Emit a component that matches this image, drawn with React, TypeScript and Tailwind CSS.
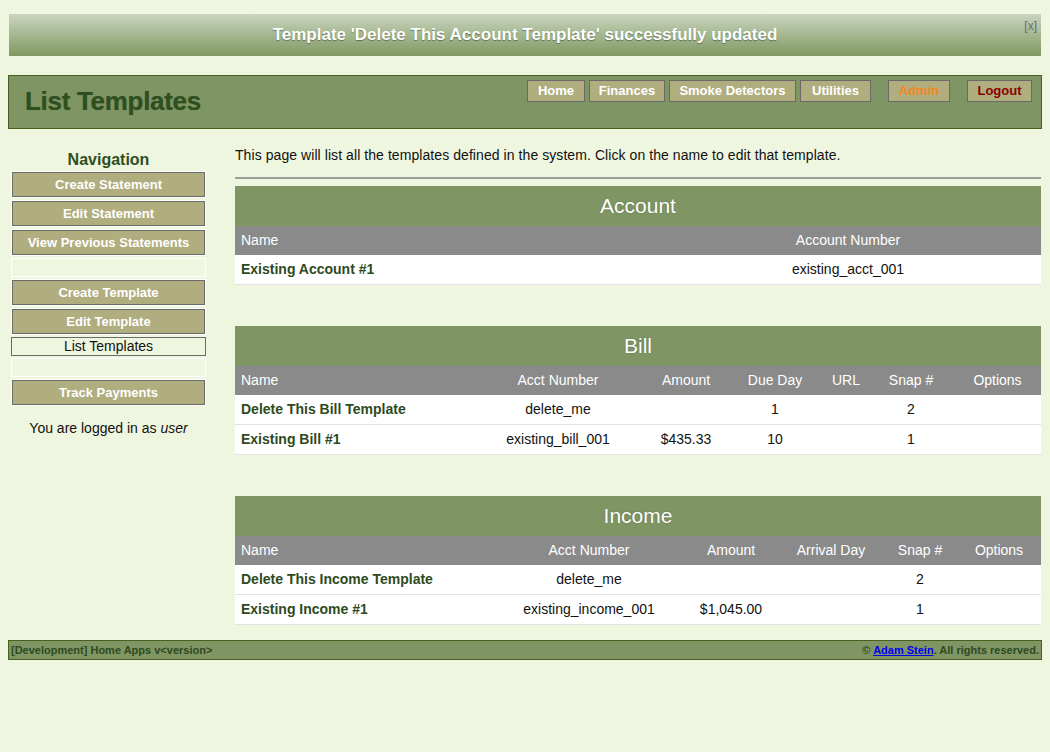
import React from 'react';

const font = "font-['Liberation_Sans',Arial,sans-serif]";

const topNav = [
  { label: 'Home', w: 'w-[58px]', color: 'text-white', ml: '' },
  { label: 'Finances', w: 'w-[76px]', color: 'text-white', ml: 'ml-[4px]' },
  { label: 'Smoke Detectors', w: 'w-[127px]', color: 'text-white', ml: 'ml-[4px]' },
  { label: 'Utilities', w: 'w-[71px]', color: 'text-white', ml: 'ml-[4px]' },
  { label: 'Admin', w: 'w-[62px]', color: 'text-[#f28a1e]', ml: 'ml-[17px]' },
  { label: 'Logout', w: 'w-[65px]', color: 'text-[#8b0000]', ml: 'ml-[17px]' },
];

type NavItem = { label?: string; kind: 'button' | 'spacer' | 'active' };

const sideNav: NavItem[] = [
  { label: 'Create Statement', kind: 'button' },
  { label: 'Edit Statement', kind: 'button' },
  { label: 'View Previous Statements', kind: 'button' },
  { kind: 'spacer' },
  { label: 'Create Template', kind: 'button' },
  { label: 'Edit Template', kind: 'button' },
  { label: 'List Templates', kind: 'active' },
  { kind: 'spacer' },
  { label: 'Track Payments', kind: 'button' },
];

type Col = { title: string; w: string; left?: boolean };

const Section = ({ title, cols, rows }: { title: string; cols: Col[]; rows: string[][] }) => (
  <div className="mb-[41px]">
    <div className="h-[40px] bg-[#7f9664] flex items-center justify-center text-[21px] text-white [text-shadow:0_0_2px_rgba(0,0,0,0.25)]">
      {title}
    </div>
    <div className="h-[29px] bg-[#8a8a8a] flex items-center text-white text-[14px]">
      {cols.map((c) => (
        <div key={c.title} className={`${c.w} ${c.left ? 'text-left pl-[6px]' : 'text-center'} shrink-0`}>
          {c.title}
        </div>
      ))}
    </div>
    {rows.map((r, i) => (
      <div key={i} className="h-[30px] bg-white border-b border-[#e2e2e2] flex items-center text-[14px] text-[#111]">
        {r.map((cell, j) => (
          <div
            key={j}
            className={`${cols[j].w} shrink-0 ${j === 0 ? 'text-left pl-[6px] font-bold text-[#2e4a1e]' : 'text-center'}`}
          >
            {cell}
          </div>
        ))}
      </div>
    ))}
  </div>
);

export default function App() {
  return (
    <div className={`min-h-[752px] bg-[#eff6df] ${font} px-[8px] pt-[14px] pb-[20px]`}>
      {/* flash message */}
      <div className="relative mx-[1px] h-[42px] bg-gradient-to-b from-[#cbd4bf] to-[#7f9a62] flex items-center justify-center">
        <span className="text-white font-bold text-[17px] [text-shadow:0_1px_1px_rgba(60,70,50,0.6)]">
          Template 'Delete This Account Template' successfully updated
        </span>
        <span className="absolute right-[4px] top-[3px] text-[12px] text-[#6b6b6b]">[x]</span>
      </div>

      {/* header */}
      <div className="mt-[19px] h-[54px] bg-[#7f9664] border border-[#46601f] flex justify-between pl-[16px] pr-[9px]">
        <h1 className="mt-[6px] text-[26px] font-bold text-[#2e4f1e] tracking-[-0.3px] [text-shadow:0_0_1px_rgba(0,0,0,0.3)]">
          List Templates
        </h1>
        <div className="flex items-start pt-[4px]">
          {topNav.map((b) => (
            <div
              key={b.label}
              className={`${b.w} ${b.ml} h-[22px] bg-[#b0ad7f] border border-[#6a6a6a] flex items-center justify-center text-[13px] font-bold ${b.color}`}
            >
              {b.label}
            </div>
          ))}
        </div>
      </div>

      {/* body */}
      <div className="flex mt-[18px]">
        <div className="ml-[3px] w-[195px] shrink-0">
          <div className="text-center text-[16px] font-bold text-[#2e4f1e] h-[24px] leading-[26px]">Navigation</div>
          <div className="flex flex-col gap-[2px]">
            {sideNav.map((n, i) =>
              n.kind === 'button' ? (
                <div key={i} className="border border-white">
                  <div className="h-[25px] bg-[#b0ad7f] border border-[#6a6a6a] flex items-center justify-center text-white font-bold text-[13px]">
                    {n.label}
                  </div>
                </div>
              ) : n.kind === 'spacer' ? (
                <div key={i} className="h-[19px] border border-white" />
              ) : (
                <div key={i} className="h-[19px] border border-[#6a6a6a] flex items-center justify-center text-[14px] text-[#111]">
                  {n.label}
                </div>
              )
            )}
          </div>
          <div className="mt-[12px] text-center text-[14px] text-[#111]">
            You are logged in as <i>user</i>
          </div>
        </div>

        <div className="ml-[29px] w-[806px] shrink-0">
          <p className="text-[14px] text-[#111] leading-[18px] -mt-[1px] tracking-[0.07px]">
            This page will list all the templates defined in the system. Click on the name to edit that template.
          </p>
          <div className="mt-[13px] border-t-2 border-[#9c9c9c] mb-[7px]" />

          <Section
            title="Account"
            cols={[
              { title: 'Name', w: 'w-[420px]', left: true },
              { title: 'Account Number', w: 'w-[386px]' },
            ]}
            rows={[['Existing Account #1', 'existing_acct_001']]}
          />
          <Section
            title="Bill"
            cols={[
              { title: 'Name', w: 'w-[235px]', left: true },
              { title: 'Acct Number', w: 'w-[176px]' },
              { title: 'Amount', w: 'w-[80px]' },
              { title: 'Due Day', w: 'w-[98px]' },
              { title: 'URL', w: 'w-[44px]' },
              { title: 'Snap #', w: 'w-[86px]' },
              { title: 'Options', w: 'w-[87px]' },
            ]}
            rows={[
              ['Delete This Bill Template', 'delete_me', '', '1', '', '2', ''],
              ['Existing Bill #1', 'existing_bill_001', '$435.33', '10', '', '1', ''],
            ]}
          />
          <Section
            title="Income"
            cols={[
              { title: 'Name', w: 'w-[260px]', left: true },
              { title: 'Acct Number', w: 'w-[188px]' },
              { title: 'Amount', w: 'w-[96px]' },
              { title: 'Arrival Day', w: 'w-[104px]' },
              { title: 'Snap #', w: 'w-[74px]' },
              { title: 'Options', w: 'w-[84px]' },
            ]}
            rows={[
              ['Delete This Income Template', 'delete_me', '', '', '2', ''],
              ['Existing Income #1', 'existing_income_001', '$1,045.00', '', '1', ''],
            ]}
          />
        </div>
      </div>

      {/* footer */}
      <div className="-mt-[26px] h-[20px] bg-[#7f9664] border border-[#46601f] flex items-center justify-between px-[2px] text-[11px] font-bold text-[#2e4a1e]">
        <span>[Development] Home Apps v&lt;version&gt;</span>
        <span>
          © <span className="text-[#0000ee] underline">Adam Stein</span>. All rights reserved.
        </span>
      </div>
    </div>
  );
}
